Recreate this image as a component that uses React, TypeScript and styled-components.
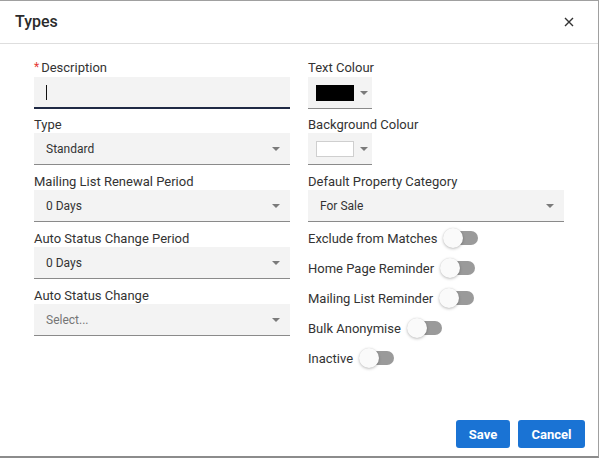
import React from "react";
import styled, { createGlobalStyle } from "styled-components";

const GlobalStyle = createGlobalStyle`
  html, body { margin: 0; padding: 0; background: #ffffff; }
  body { font-family: Roboto, "Liberation Sans", Arial, sans-serif; color: #333; }
  * { box-sizing: border-box; }
`;

const Dialog = styled.div`
  width: 599px;
  height: 458px;
  display: flex;
  flex-direction: column;
  background: #fff;
  border-top: 1px solid #a0a0a0;
  border-right: 1px solid #a0a0a0;
  border-bottom: 2px solid #8c8c8c;
`;

const Header = styled.div`
  height: 43px;
  flex: none;
  display: flex;
  align-items: center;
  justify-content: space-between;
  padding: 0 24px 0 15px;
  border-bottom: 1px solid #dedede;
`;

const Title = styled.h2`
  margin: 0;
  font-size: 16px;
  font-weight: 500;
  color: #2b2b2b;
  line-height: 20px;
`;

const CloseButton = styled.button`
  border: 0;
  background: none;
  padding: 0;
  width: 10px;
  height: 10px;
  display: flex;
  align-items: center;
  justify-content: center;
  cursor: pointer;
`;

const Body = styled.div`
  flex: 1;
  display: grid;
  grid-template-columns: 256px 256px;
  column-gap: 18px;
  padding: 18px 0 0 34px;
`;

const Column = styled.div`
  display: flex;
  flex-direction: column;
`;

const Field = styled.div<{ $top?: number }>`
  display: flex;
  flex-direction: column;
  margin-top: ${(p) => p.$top ?? 11}px;
`;

const Label = styled.label<{ $gap?: number }>`
  font-size: 13px;
  line-height: 12px;
  height: 14px;
  color: #333;
  margin-bottom: ${(p) => p.$gap ?? 0}px;
  white-space: nowrap;
`;

const Required = styled.span`
  color: #e53935;
  font-size: 12px;
  margin-right: 2px;
  position: relative;
  top: -1px;
`;

const TextInput = styled.div`
  height: 32px;
  background: #f3f3f3;
  border-bottom: 2px solid #1f2944;
  display: flex;
  align-items: center;
  padding-left: 12px;
`;

const Caret = styled.span`
  width: 1px;
  height: 15px;
  background: #111;
`;

const Select = styled.div`
  height: 32px;
  width: 100%;
  background: #f3f3f3;
  border-bottom: 1px solid #8a8a8a;
  display: flex;
  align-items: center;
  justify-content: space-between;
  padding: 0 10px 0 12px;
  font-size: 12px;
`;

const SelectValue = styled.span<{ $placeholder?: boolean }>`
  color: ${(p) => (p.$placeholder ? "#757575" : "#333")};
`;

const Arrow = styled.span`
  width: 0;
  height: 0;
  border-left: 4px solid transparent;
  border-right: 4px solid transparent;
  border-top: 4px solid #7a7a7a;
  margin-top: 1px;
`;

const ColourPicker = styled.div`
  width: 64px;
  height: 32px;
  background: #f3f3f3;
  border-bottom: 1px solid #8a8a8a;
  display: flex;
  align-items: center;
  padding: 0 4px 0 8px;
  gap: 6px;
`;

const Swatch = styled.span<{ $colour: string }>`
  width: 39px;
  height: 16px;
  background: ${(p) => p.$colour};
  border: 1px solid ${(p) => (p.$colour === "#000000" ? "#000" : "#cfcfcf")};
`;

const ToggleList = styled.div`
  display: flex;
  flex-direction: column;
  margin-top: 1px;
`;

const ToggleRow = styled.div`
  height: 30px;
  display: flex;
  align-items: center;
  font-size: 13px;
  color: #333;
`;

const Switch = styled.span`
  position: relative;
  margin-left: 7px;
  width: 34px;
  height: 14px;
  border-radius: 7px;
  background: #9a9a9a;
`;

const Knob = styled.span`
  position: absolute;
  left: -1px;
  top: -3px;
  width: 20px;
  height: 20px;
  border-radius: 50%;
  background: #fafafa;
  box-shadow: 0 1px 3px rgba(0, 0, 0, 0.25), 0 0 1px rgba(0, 0, 0, 0.12);
`;

const Footer = styled.div`
  flex: none;
  display: flex;
  justify-content: flex-end;
  gap: 8px;
  padding: 0 13px 8px 0;
`;

const Button = styled.button`
  height: 28px;
  border: 0;
  border-radius: 3px;
  background: #1a73d4;
  color: #fff;
  font-family: Roboto, "Liberation Sans", Arial, sans-serif;
  font-weight: 700;
  font-size: 13px;
  padding: 0 12px;
  cursor: pointer;
`;

const SaveButton = styled(Button)`
  width: 54px;
`;

const CancelButton = styled(Button)`
  width: 67px;
`;

const leftSelects = [
  { label: "Type", value: "Standard", top: 10 },
  { label: "Mailing List Renewal Period", value: "0 Days", top: 11 },
  { label: "Auto Status Change Period", value: "0 Days", top: 11 },
  { label: "Auto Status Change", value: "Select...", placeholder: true, top: 11 },
];

const toggles = [
  "Exclude from Matches",
  "Home Page Reminder",
  "Mailing List Reminder",
  "Bulk Anonymise",
  "Inactive",
];

export default function App() {
  return (
    <>
      <GlobalStyle />
      <Dialog>
        <Header>
          <Title>Types</Title>
          <CloseButton aria-label="Close">
            <svg width="10" height="10" viewBox="0 0 10 10">
              <path d="M1 1 L9 9 M9 1 L1 9" stroke="#333" strokeWidth="1.4" fill="none" />
            </svg>
          </CloseButton>
        </Header>
        <Body>
          <Column>
            <Field $top={0}>
              <Label $gap={1}>
                <Required>*</Required>Description
              </Label>
              <TextInput>
                <Caret />
              </TextInput>
            </Field>
            {leftSelects.map((s) => (
              <Field key={s.label} $top={s.top}>
                <Label>{s.label}</Label>
                <Select>
                  <SelectValue $placeholder={s.placeholder}>{s.value}</SelectValue>
                  <Arrow />
                </Select>
              </Field>
            ))}
          </Column>
          <Column>
            <Field $top={0}>
              <Label $gap={1}>Text Colour</Label>
              <ColourPicker>
                <Swatch $colour="#000000" />
                <Arrow />
              </ColourPicker>
            </Field>
            <Field $top={10}>
              <Label>Background Colour</Label>
              <ColourPicker>
                <Swatch $colour="#ffffff" />
                <Arrow />
              </ColourPicker>
            </Field>
            <Field $top={11}>
              <Label>Default Property Category</Label>
              <Select>
                <SelectValue>For Sale</SelectValue>
                <Arrow />
              </Select>
            </Field>
            <ToggleList>
              {toggles.map((t) => (
                <ToggleRow key={t}>
                  {t}
                  <Switch>
                    <Knob />
                  </Switch>
                </ToggleRow>
              ))}
            </ToggleList>
          </Column>
        </Body>
        <Footer>
          <SaveButton>Save</SaveButton>
          <CancelButton>Cancel</CancelButton>
        </Footer>
      </Dialog>
    </>
  );
}
